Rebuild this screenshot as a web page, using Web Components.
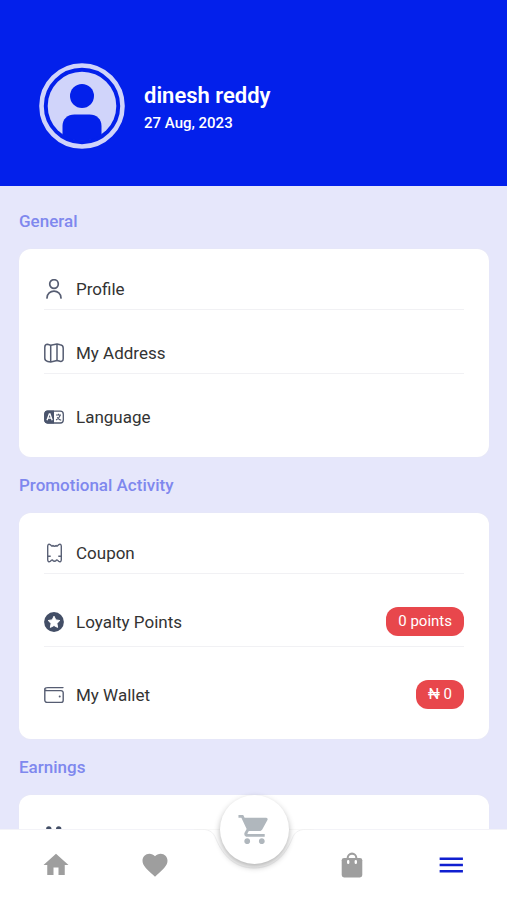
<!DOCTYPE html>
<html lang="en">
<head>
<meta charset="utf-8">
<meta name="viewport" content="width=device-width, initial-scale=1">
<title>Menu</title>
<style>
  html, body { margin: 0; height: 100%; }
  body { font-family: Roboto, "Liberation Sans", sans-serif; color: #333; }
</style>
</head>
<body>
<menu-screen></menu-screen>
<script>
const define = (name, html) => {
  const template = document.createElement('template');
  template.innerHTML = html;
  customElements.define(name, class extends HTMLElement {
    constructor() {
      super();
      this.attachShadow({ mode: 'open' }).append(template.content.cloneNode(true));
    }
  });
};

const icons = {
  profile: ['0 0 20 20', '<g fill="none" stroke="#565d72" stroke-width="1.7" stroke-linecap="round"><circle cx="10" cy="5" r="4.3"/><path d="M3 19c0-9.3 14-9.3 14 0"/></g>'],
  address: ['0 0 20 20', '<g fill="none" stroke="#565d72" stroke-width="1.5" stroke-linejoin="round"><path d="M.8 4.2C.8 2 2 1.3 3.5 1.3L6.7 2.2 13 .9l3.2.8c2 .4 3 1.200 3 3.200v10.800c0 2.200-1.500 3-3.200 2.600l-3-.7-6.300 1.500-3-.7C1.600 17.900.8 17 .8 15.200z"/><path d="M6.700 2.200v16.900M13 .9v16.700"/></g>'],
  language: ['0 0 20 20', '<rect x=".7" y="4.200" width="18.600" height="11.800" rx="3" fill="#fff" stroke="#4f586e" stroke-width="1.300"/><path d="M3.500 3.600H10v13H3.500A3 3 0 0 1 .5 13.600v-7a3 3 0 0 1 3-3z" fill="#4a546c"/><path d="M3 13.200 5.300 7h.7l2.200 6.200M3.900 11.200h3.500" fill="none" stroke="#fff" stroke-width="1.300"/><path d="M12 8h5M14.500 6.700V8M16.200 8c-.5 2.500-2.300 4-4.200 5M13.200 10.200c1 1.600 2.200 2.500 4 3" fill="none" stroke="#4f586e" stroke-width="1.100"/>'],
  coupon: ['0 0 20 20', '<path d="M3.700 4v12.800c0 2 1.300 2.600 2.700 1.400l1-.9c.6-.5 1.100-.4 1.500.2.700 1 2.500 1 3.200 0 .4-.6 1-.7 1.500-.2l1 .9c1.400 1.200 2.700.6 2.700-1.400V3.200c0-2-1.300-2.600-2.700-1.400l-1 .9c-.5.500-1.100.4-1.500-.2h0c-.7 1-2.500 1-3.200 0-.4.600-1 .7-1.500.2l-1-.9C5 .6 3.700 1.200 3.700 3.200z" fill="none" stroke="#5a6176" stroke-width="1.400" stroke-linejoin="round"/><path d="M3.700 13.300h3M14.300 13.300h3" stroke="#5a6176" stroke-width="1.400"/>'],
  loyalty: ['0 0 20 20', '<circle cx="10" cy="10" r="9.900" fill="#434e66"/><path d="m10 4.200 1.800 3.700 4 .6-2.900 2.900.7 4-3.600-1.900-3.600 1.900.7-4-2.900-2.900 4-.6z" fill="#fff" stroke="#fff" stroke-width="1" stroke-linejoin="round"/>'],
  wallet: ['0 0 20 20', '<g fill="none" stroke="#565d72" stroke-width="1.400" stroke-linecap="round"><path d="M19 2.600H3.800C-.2 2.600-.2 5.600 3.200 5.600H17a2.200 2.200 0 0 1 2.200 2.200v7.400a2.200 2.200 0 0 1-2.200 2.200H3a2.200 2.200 0 0 1-2.200-2.200V4.700"/></g><circle cx="15.700" cy="11.600" r="1" fill="#565d72"/>'],
  refer: ['0 0 20 20', '<circle cx="4.800" cy="4" r="2.700" fill="#434e66"/><circle cx="14.700" cy="4" r="2.700" fill="#434e66"/><path d="M1 18v-6c0-4 7-4 9 0 2-4 9-4 9 0v6z" fill="#434e66"/>'],
  home: ['0 0 24 24', '<path fill="#9e9e9e" d="M10 20v-6h4v6h5v-8h3L12 3 2 12h3v8z"/>'],
  heart: ['0 0 24 24', '<path fill="#9e9e9e" d="m12 21.350-1.450-1.320C5.400 15.360 2 12.280 2 8.500 2 5.420 4.420 3 7.500 3c1.740 0 3.410.81 4.500 2.090C13.090 3.810 14.760 3 16.500 3 19.580 3 22 5.420 22 8.500c0 3.780-3.400 6.860-8.550 11.540z"/>'],
  cart: ['0 0 24 24', '<path fill="#b0b7bd" d="M7 18c-1.100 0-1.990.9-1.990 2S5.900 22 7 22s2-.9 2-2-.9-2-2-2zM1 2v2h2l3.600 7.590-1.350 2.450c-.16.28-.25.61-.25.960 0 1.100.9 2 2 2h12v-2H7.420c-.14 0-.25-.11-.25-.25l.03-.12.900-1.630h7.450c.75 0 1.410-.41 1.750-1.030l3.580-6.490A1 1 0 0 0 20 4H5.210l-.94-2zm16 16c-1.100 0-1.990.9-1.990 2s.89 2 1.990 2 2-.9 2-2-.9-2-2-2z"/>'],
  bag: ['0 0 24 24', '<path d="M8 8V5.500a4 4 0 0 1 8 0V8" fill="none" stroke="#9e9e9e" stroke-width="1.900"/><rect x="2.500" y="5.500" width="19" height="18" rx="2.200" fill="#9e9e9e"/><path d="M8.500 8.500v1.500M15.500 8.500v1.500" stroke="#fff" stroke-width="2.200" stroke-linecap="round"/>'],
  menu: ['0 0 24 24', '<path d="M1.500 6.200h21.500M1.500 12h21.500M1.500 17.800h21.500" stroke="#101fd0" stroke-width="2.300"/>']
};

customElements.define('app-icon', class extends HTMLElement {
  connectedCallback() {
    const [box, art] = icons[this.getAttribute('name')];
    const root = this.shadowRoot || this.attachShadow({ mode: 'open' });
    root.innerHTML = `<style>
      :host { display: block; flex: none; width: var(--icon-size, 20px); height: var(--icon-size, 20px); }
      svg { display: block; width: 100%; height: 100%; }
    </style><svg viewBox="${box}" aria-hidden="true">${art}</svg>`;
  }
});

define('profile-header', `<style>
  :host { display: flex; align-items: center; gap: 19px; padding: 63px 39px 37px; background: #0320eb; color: #fff; }
  svg { display: block; flex: none; width: 86px; height: 86px; }
  .who { padding-top: 5px; }
  h1 { margin: 0; font-size: 22px; line-height: 28px; font-weight: 600; }
  p { margin: 0; font-size: 15px; line-height: 26px; font-weight: 500; }
</style>
<svg viewBox="0 0 86 86" role="img" aria-label="Profile picture">
  <circle cx="43" cy="43" r="40.500" fill="none" stroke="#d0d4fa" stroke-width="4.600"/>
  <circle cx="43" cy="43" r="34.300" fill="#d0d4fa"/>
  <circle cx="43" cy="33" r="12" fill="#0320eb"/>
  <path d="M23.500 72V63c0-7 5-11.500 12-11.500h15c7 0 12 4.500 12 11.500v9C53 79.500 33 79.500 23.500 72z" fill="#0320eb" stroke="none"/>
  <path d="M23.500 70h39C55 80 31 80 23.500 70z" fill="#0320eb"/>
</svg>
<div class="who"><h1><slot name="name"></slot></h1><p><slot name="date"></slot></p></div>`);

define('menu-section', `<style>
  :host { display: block; }
  h2 { margin: 0; font-size: 17px; line-height: 56px; font-weight: 500; color: #7f88ee; }
  .card { display: flex; flex-direction: column; gap: 23px; padding: 20px 25px; background: #fff; border-radius: 12px; box-shadow: 0 0 2px #e9e9f2; }
</style>
<h2><slot name="title"></slot></h2><div class="card"><slot></slot></div>`);

define('value-badge', `<style>
  :host { display: block; padding: 0 12px; border-radius: 12px; background: #e8474c; color: #fff; font-size: 15px; line-height: 29px; }
</style><slot></slot>`);

customElements.define('menu-row', class extends HTMLElement {
  connectedCallback() {
    const root = this.shadowRoot || this.attachShadow({ mode: 'open' });
    root.innerHTML = `<style>
      :host { display: block; border-bottom: 1px solid #f1f1f4; }
      :host(:last-child) { border-bottom: 0; }
      a { display: flex; align-items: center; gap: 12px; padding: 10px 0; color: #333; text-decoration: none; font-size: 17px; line-height: 20px; }
      .label { flex: 1; }
    </style>
    <a href="#${this.getAttribute('icon')}"><app-icon name="${this.getAttribute('icon')}"></app-icon>
      <span class="label"><slot></slot></span><slot name="value"></slot></a>`;
  }
});

define('bottom-nav', `<style>
  :host { display: block; position: relative; background: #fff; border-top: 1px solid #f3f3f8; }
  nav { display: grid; grid-template-columns: repeat(5, 1fr); height: 70px; padding: 0 7px; }
  button { display: grid; place-items: center; padding: 0; border: 0; background: none; cursor: pointer; }
  .tab { --icon-size: 30px; }
  .small { --icon-size: 26px; }
  .cart { position: absolute; left: 50%; top: -35px; margin-left: -34px; width: 69px; height: 69px; border-radius: 50%; background: #fff; box-shadow: 0 3px 6px rgba(0,0,0,.3); --icon-size: 35px; }
  .notch { position: absolute; left: 50%; top: -1px; margin-left: -60px; width: 120px; height: 48px; }
</style>
<nav aria-label="Main">
  <button class="tab" aria-label="Home"><app-icon name="home"></app-icon></button>
  <button class="tab" aria-label="Favourites"><app-icon name="heart"></app-icon></button>
  <span></span>
  <button class="small" aria-label="Orders"><app-icon name="bag"></app-icon></button>
  <button class="small" aria-label="Menu"><app-icon name="menu"></app-icon></button>
</nav>
<svg class="notch" viewBox="0 0 120 48" aria-hidden="true"><path d="M0 0h2c13 0 17 2 20 10 7 17 19 29 38 29s31-12 38-29c3-8 7-10 20-10h2z" fill="#fff" stroke="#f1f1f2"/></svg>
<button class="cart" aria-label="Cart"><app-icon name="cart"></app-icon></button>`);

define('menu-screen', `<style>
  :host { display: flex; flex-direction: column; height: 100vh; overflow: hidden; background: #e6e7fb; }
  main { flex: 1; min-height: 0; overflow: hidden; padding: 7px 18px 0 19px; }
</style>
<profile-header><span slot="name">dinesh reddy</span><span slot="date">27 Aug, 2023</span></profile-header>
<main>
  <menu-section><span slot="title">General</span>
    <menu-row icon="profile">Profile</menu-row>
    <menu-row icon="address">My Address</menu-row>
    <menu-row icon="language">Language</menu-row>
  </menu-section>
  <menu-section><span slot="title">Promotional Activity</span>
    <menu-row icon="coupon">Coupon</menu-row>
    <menu-row icon="loyalty">Loyalty Points<value-badge slot="value">0 points</value-badge></menu-row>
    <menu-row icon="wallet">My Wallet<value-badge slot="value">₦ 0</value-badge></menu-row>
  </menu-section>
  <menu-section><span slot="title">Earnings</span>
    <menu-row icon="refer"></menu-row>
  </menu-section>
</main>
<bottom-nav></bottom-nav>`);
</script>
</body>
</html>
